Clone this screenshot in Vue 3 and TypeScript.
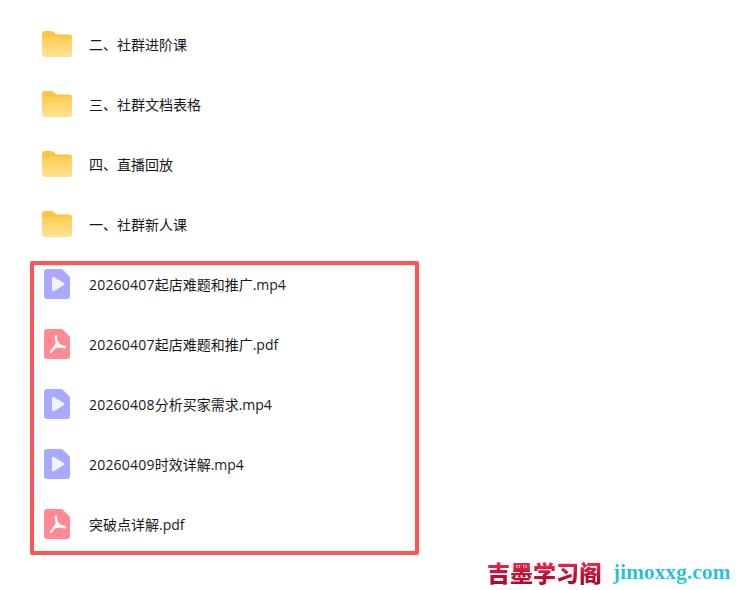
<script setup lang="ts">
type Kind = 'folder' | 'video' | 'pdf';

const rows: { name: string; kind: Kind }[] = [
  { name: '二、社群进阶课', kind: 'folder' },
  { name: '三、社群文档表格', kind: 'folder' },
  { name: '四、直播回放', kind: 'folder' },
  { name: '一、社群新人课', kind: 'folder' },
  { name: '20260407起店难题和推广.mp4', kind: 'video' },
  { name: '20260407起店难题和推广.pdf', kind: 'pdf' },
  { name: '20260408分析买家需求.mp4', kind: 'video' },
  { name: '20260409时效详解.mp4', kind: 'video' },
  { name: '突破点详解.pdf', kind: 'pdf' },
];

// 日期前缀单独一段,数字比其余文字略宽
function datePrefix(name: string): string {
  return name.match(/^\d+/)?.[0] ?? '';
}
</script>

<template>
  <div class="page">
    <ul class="list">
      <li v-for="row in rows" :key="row.name + row.kind" class="row">
        <span class="icon" :class="row.kind">
          <svg v-if="row.kind === 'folder'" width="30" height="26" viewBox="0 0 30 26">
            <path d="M0 3a3 3 0 0 1 3-3h6.200c1 0 1.800.4 2.500 1.100L14 3.400h13a3 3 0 0 1 3 3V8H0z" fill="#ffc440" />
            <path d="M0 6h27a3 3 0 0 1 3 3v14a3 3 0 0 1-3 3H3a3 3 0 0 1-3-3z" fill="url(#folderFill)" />
            <defs>
              <linearGradient id="folderFill" x1="0" y1="0" x2="0" y2="1">
                <stop offset="0" stop-color="#ffce55" />
                <stop offset="1" stop-color="#ffe391" />
              </linearGradient>
            </defs>
          </svg>
          <svg v-else-if="row.kind === 'video'" width="26" height="30" viewBox="0 0 26 30">
            <path d="M3 0h14c.8 0 1.500.3 2.100.9l6 6.200c.6.600.9 1.300.9 2.100V27a3 3 0 0 1-3 3H3a3 3 0 0 1-3-3V3a3 3 0 0 1 3-3z" fill="#a9a9ff" />
            <path d="M8 8.900c0-.9 1-1.500 1.800-1l10 6.200c.8.500.8 1.600 0 2l-10 6.200c-.8.500-1.800-.1-1.800-1z" fill="#f3f3ff" />
          </svg>
          <svg v-else width="26" height="30" viewBox="0 0 26 30">
            <path d="M3 0h14c.8 0 1.500.3 2.100.9l6 6.200c.6.600.9 1.300.9 2.100V27a3 3 0 0 1-3 3H3a3 3 0 0 1-3-3V3a3 3 0 0 1 3-3z" fill="#ff8a94" />
            <g fill="none" stroke="#fff" stroke-width="2.300" stroke-linecap="round">
              <path d="M12 7.500C11.600 11 13 14.200 15.500 16.200C17 17.400 19 18.200 20.800 18.600" />
              <path d="M13.300 13.500C11.800 17 9.500 20.500 6.800 23" />
              <path d="M10.500 18.300C13.500 17.200 17 17 20.800 17.800" />
            </g>
          </svg>
        </span>
        <span class="name"><span class="date">{{ datePrefix(row.name) }}</span>{{ row.name.slice(datePrefix(row.name).length) }}</span>
      </li>
    </ul>
    <div class="highlight"></div>
    <div class="watermark">
      <span class="brand">吉墨学习阁</span>
      <span class="domain">jimoxxg.com</span>
    </div>
  </div>
</template>

<style scoped>
.page {
  position: relative;
  width: 738px;
  height: 590px;
  overflow: hidden;
  background: #fff;
}
.list {
  list-style: none;
  margin: 0;
  padding: 14px 0 0 42px;
}
.row {
  display: flex;
  align-items: center;
  height: 60px;
}
.icon {
  display: flex;
  width: 30px;
  justify-content: center;
  margin-right: 17px;
}
.video,
.pdf {
  justify-content: flex-start;
  padding-left: 2px;
  box-sizing: border-box;
}
.name {
  font-family: "Open Sans", "Noto Sans CJK SC", sans-serif;
  font-size: 14px;
  font-weight: 400;
  color: #16191d;
}
.date {
  letter-spacing: 0.2px;
}
.highlight {
  position: absolute;
  left: 30px;
  top: 261px;
  width: 389px;
  height: 294px;
  box-sizing: border-box;
  border: 4px solid #ff5555;
  border-radius: 2px;
}
.watermark {
  position: absolute;
  left: 487px;
  top: 557px;
  display: flex;
  align-items: center;
  gap: 11px;
}
.brand {
  font-family: "Noto Sans CJK SC", sans-serif;
  font-size: 23px;
  font-weight: 900;
  line-height: 30px;
  background: linear-gradient(180deg, #f0405a 0%, #c80a32 60%, #a0082a 100%);
  -webkit-background-clip: text;
  background-clip: text;
  color: transparent;
}
.domain {
  font-family: "Liberation Serif", serif;
  font-size: 21.500px;
  font-weight: 700;
  line-height: 30px;
  background: linear-gradient(180deg, #2ab4d8 20%, #20d0d8 90%);
  -webkit-background-clip: text;
  background-clip: text;
  color: transparent;
}
</style>
